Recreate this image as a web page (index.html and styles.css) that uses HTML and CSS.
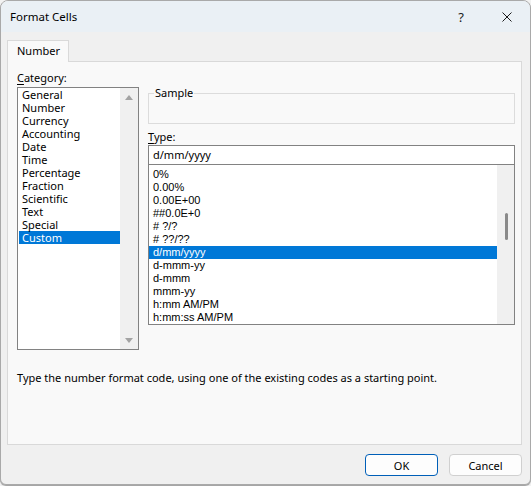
FILE: index.html
```html
<!DOCTYPE html>
<html>
<head>
<meta charset="utf-8">
<title>Format Cells</title>
<link rel="stylesheet" href="styles.css">
</head>
<body>
<div class="window">
  <div class="titlebar">
    <span class="title">Format Cells</span>
    <span class="cap-btn help">?</span>
    <span class="cap-btn close"><svg width="10" height="10" viewBox="0 0 10 10"><path d="M0.5 0.5L9.5 9.5M9.5 0.5L0.5 9.5" stroke="#1b1b1b" stroke-width="1" fill="none"/></svg></span>
  </div>
  <div class="client">
    <div class="tabs"><div class="tab">Number</div></div>
    <div class="panel">
      <div class="main">
        <div class="left">
          <div class="label"><u>C</u>ategory:</div>
          <div class="listbox cat">
            <ul class="items">
              <li>General</li>
              <li>Number</li>
              <li>Currency</li>
              <li>Accounting</li>
              <li>Date</li>
              <li>Time</li>
              <li>Percentage</li>
              <li>Fraction</li>
              <li>Scientific</li>
              <li>Text</li>
              <li>Special</li>
              <li class="sel">Custom</li>
            </ul>
            <div class="vscroll arrows"><span class="arrow up"></span><span class="arrow down"></span></div>
          </div>
        </div>
        <div class="right">
          <fieldset class="sample"><legend>Sample</legend></fieldset>
          <div class="label type-label"><u>T</u>ype:</div>
          <div class="input">d/mm/yyyy</div>
          <div class="listbox types">
            <ul class="items">
              <li>0%</li>
              <li>0.00%</li>
              <li>0.00E+00</li>
              <li>##0.0E+0</li>
              <li># ?/?</li>
              <li># ??/??</li>
              <li class="sel">d/mm/yyyy</li>
              <li>d-mmm-yy</li>
              <li>d-mmm</li>
              <li>mmm-yy</li>
              <li>h:mm AM/PM</li>
              <li>h:mm:ss AM/PM</li>
            </ul>
            <div class="vscroll"><span class="thumb"></span></div>
          </div>
        </div>
      </div>
      <p class="desc">Type the number format code, using one of the existing codes as a starting point.</p>
    </div>
    <div class="buttons">
      <button class="btn default">OK</button>
      <button class="btn">Cancel</button>
    </div>
  </div>
</div>
</body>
</html>
```

FILE: styles.css
```css
* { box-sizing: border-box; }
html, body { margin: 0; padding: 0; }
body {
  width: 531px;
  height: 486px;
  background: #f2f2f2;
  font-family: "Noto Sans", "Open Sans", sans-serif;
  font-size: 11px;
  color: #000;
  overflow: hidden;
}
.window {
  width: 531px;
  height: 485px;
  border: 1px solid #a9a9a9;
  border-radius: 8px 8px 6px 6px;
  background: #f0f0f0;
  display: flex;
  flex-direction: column;
  overflow: hidden;
  box-shadow: 0 1px 1px rgba(0,0,0,0.35);
}
.titlebar {
  height: 31px;
  flex: none;
  display: flex;
  align-items: center;
  background: #eaf0f5;
}
.title {
  flex: 1;
  padding-left: 9px;
  font-size: 11.5px;
  line-height: 16px;
}
.cap-btn {
  width: 46px;
  height: 31px;
  display: flex;
  align-items: center;
  justify-content: center;
}
.help { font-size: 13px; color: #1b1b1b; }
.client {
  flex: 1;
  display: flex;
  flex-direction: column;
  padding: 8px 8px 0 6px;
}
.tabs { display: flex; height: 21px; }
.tab {
  width: 62px;
  height: 22px;
  border: 1px solid #d9d9d9;
  border-bottom: none;
  background: #f9f9f9;
  padding-left: 9px;
  line-height: 20px;
  position: relative;
  z-index: 1;
}
.panel {
  width: 515px;
  height: 384px;
  border: 1px solid #d9d9d9;
  background: #f9f9f9;
  padding: 8px 0 0 9px;
}
.main { display: flex; align-items: flex-start; gap: 9px; }
.left { width: 122px; }
.label { line-height: 16px; height: 17px; }
.label u { text-decoration: underline; text-underline-offset: 2px; }
.listbox {
  display: flex;
  background: #fff;
  border: 1px solid #828282;
}
.items { list-style: none; margin: 0; padding: 0; }
.cat { height: 263px; }
.cat .items { width: 102px; padding: 0 0 0 1px; }
.cat li { line-height: 13px; height: 13px; padding-left: 3px; }
.sel { background: #0078d7; color: #fff; }
.vscroll {
  background: #f0f0f0;
  display: flex;
  flex-direction: column;
  align-items: center;
}
.cat .vscroll { width: 18px; justify-content: space-between; padding: 7px 0 6px; }
.arrow { width: 0; height: 0; border-left: 4px solid transparent; border-right: 4px solid transparent; }
.arrow.up { border-bottom: 5px solid #a3a3a3; }
.arrow.down { border-top: 5px solid #a3a3a3; }
.right { width: 367px; }
.sample {
  margin: 16px 0 0;
  padding: 0 0 0 5px;
  border: 1px solid #dcdcdc;
  height: 38px;
  min-width: 0;
}
.sample legend { padding: 0 1px; line-height: 14px; }
.type-label { margin-top: 5px; height: 16px; }
.input {
  height: 20px;
  background: #fff;
  border: 1px solid #828282;
  padding-left: 4px;
  line-height: 18px;
}
.types { height: 161px; margin-top: -1px; }
.types .items {
  flex: 1;
  padding-top: 3px;
  font-family: "Liberation Sans", Arial, sans-serif;
  font-size: 11px;
}
.types li { line-height: 13px; height: 13px; padding-left: 4px; }
.types .vscroll { width: 17px; }
.thumb {
  width: 3px;
  height: 27px;
  margin-top: 48px;
  margin-left: 1px;
  border-radius: 2px;
  background: #8a8a8a;
}
.desc { margin: 20px 0 0; line-height: 16px; }
.buttons {
  display: flex;
  justify-content: flex-end;
  gap: 11px;
  margin-top: 9px;
  padding-right: 0;
}
.btn {
  width: 73px;
  height: 22px;
  background: #fdfdfd;
  border: 1px solid #d0d0d0;
  border-radius: 4px;
  font-family: inherit;
  font-size: 11px;
  color: #000;
  padding: 0;
}
.btn.default { border-color: #005fb8; }
```
